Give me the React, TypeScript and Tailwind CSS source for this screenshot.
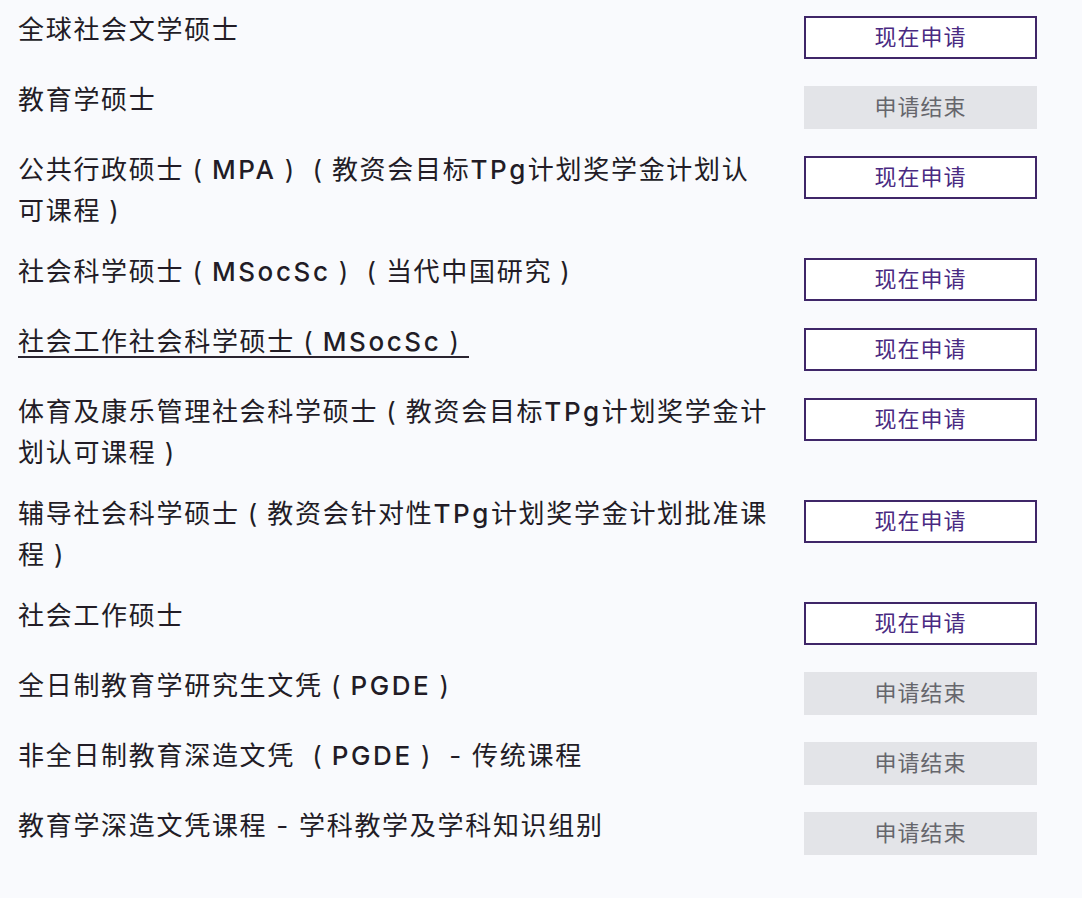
import React from "react";

type Row = { lines: string[]; open: boolean; underline?: boolean };

const rows: Row[] = [
  { lines: ["全球社会文学硕士"], open: true },
  { lines: ["教育学硕士"], open: false },
  { lines: ["公共行政硕士（MPA）（教资会目标TPg计划奖学金计划认", "可课程）"], open: true },
  { lines: ["社会科学硕士（MSocSc）（当代中国研究）"], open: true },
  { lines: ["社会工作社会科学硕士（MSocSc）"], open: true, underline: true },
  { lines: ["体育及康乐管理社会科学硕士（教资会目标TPg计划奖学金计", "划认可课程）"], open: true },
  { lines: ["辅导社会科学硕士（教资会针对性TPg计划奖学金计划批准课", "程）"], open: true },
  { lines: ["社会工作硕士"], open: true },
  { lines: ["全日制教育学研究生文凭（PGDE）"], open: false },
  { lines: ["非全日制教育深造文凭 （PGDE） - 传统课程"], open: false },
  { lines: ["教育学深造文凭课程 - 学科教学及学科知识组别"], open: false },
];

function renderLine(s: string) {
  const parts = s.split(/([（）]|[A-Za-z]+)/).filter((p) => p !== "");
  return parts.map((p, i) => {
    if (p === "（" || p === "）") {
      return (
        <span key={i} className="inline-block w-[27.7px] text-center">
          {p === "（" ? "(" : ")"}
        </span>
      );
    }
    if (/^[A-Za-z]+$/.test(p)) {
      return (
        <span key={i} className="font-medium tracking-[2.6px]">
          {p}
        </span>
      );
    }
    return <React.Fragment key={i}>{p}</React.Fragment>;
  });
}

export default function App() {
  return (
    <div
      className="w-[1082px] h-[898px] bg-[#f9fafd] pt-[10px] overflow-hidden"
      style={{ fontFamily: '"Inter", "Noto Sans CJK SC", sans-serif' }}
    >
      {rows.map((r, i) => (
        <div key={i} className="flex items-start pb-[21px] pl-[18px] pr-[45px]">
          <div className="flex-1 text-[26px] leading-[40.5px] tracking-[1.7px] text-[#221c26] whitespace-nowrap">
            {r.lines.map((l, j) => (
              <div key={j}>
                {r.underline ? (
                  <span className="inline-block leading-[28px] border-b-2 border-[#2a2430]">
                    {renderLine(l)}
                  </span>
                ) : (
                  renderLine(l)
                )}
              </div>
            ))}
          </div>
          {r.open ? (
            <div className="mt-[6px] w-[233px] h-[43px] border-2 border-[#3f2668] bg-white flex items-center justify-center text-[22px] tracking-[1px] text-[#4a2a82]">
              现在申请
            </div>
          ) : (
            <div className="mt-[6px] w-[233px] h-[43px] bg-[#e3e4e8] flex items-center justify-center text-[22px] tracking-[1px] text-[#66666c]">
              申请结束
            </div>
          )}
        </div>
      ))}
    </div>
  );
}
